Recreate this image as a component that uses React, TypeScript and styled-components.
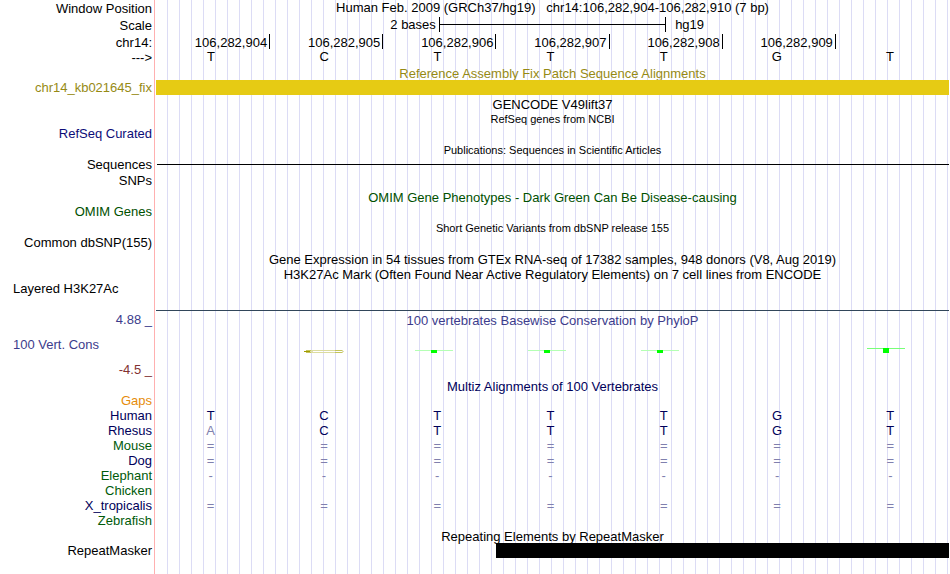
import React from "react";
import styled, { createGlobalStyle } from "styled-components";

const GlobalStyle = createGlobalStyle`
  body {
    margin: 0;
    background: #ffffff;
    color: #000000;
    font-family: "Liberation Sans", Arial, Helvetica, sans-serif;
    font-size: 13px;
    line-height: 15px;
  }
`;

const colors = {
  black: "#000000",
  olive: "#968a14",
  gold: "#e6cb14",
  navy: "#0c0c78",
  green: "#005000",
  violet: "#3c3c8c",
  maroon: "#823232",
  orange: "#e68c0a",
  slate: "#32465a",
  species: "#00005a",
  speciesAlt: "#005a0a",
  faded: "#8080ae",
};

const Browser = styled.main`
  box-sizing: border-box;
  min-height: 100vh;
  padding-right: 1px;
  padding-bottom: 16px;
  background:
    linear-gradient(#ffb0b0, #ffb0b0) 154px 0 / 1px 100% no-repeat,
    repeating-linear-gradient(to right, transparent 0 11px, #dcdcf5 11px 12px) 156px 0 / 100% 100% no-repeat;
`;

const Row = styled.div<{ $height?: number; $gap?: number }>`
  display: grid;
  grid-template-columns: 152px minmax(0, 1fr);
  column-gap: 4px;
  align-items: center;
  min-height: ${(p) => p.$height ?? 15}px;
  margin-top: ${(p) => p.$gap ?? 0}px;
`;

const Label = styled.div<{ $color?: string; $left?: boolean; $low?: boolean }>`
  grid-column: 1;
  height: 15px;
  padding-left: 13px;
  line-height: ${(p) => (p.$low ? 17 : 15)}px;
  text-align: ${(p) => (p.$left ? "left" : "right")};
  white-space: nowrap;
  color: ${(p) => p.$color ?? colors.black};
`;

const Title = styled.div<{ $color?: string; $small?: boolean }>`
  grid-column: 2;
  height: 15px;
  text-align: center;
  white-space: pre;
  font-size: ${(p) => (p.$small ? 11 : 13)}px;
  line-height: 17px;
  color: ${(p) => p.$color ?? colors.black};
`;

const WindowTitle = styled(Title)`
  line-height: 13px;
`;

const ScaleGrid = styled.div`
  display: grid;
  grid-template-columns: 5fr 4fr 5fr;
  align-items: center;
  padding-right: 1px;
`;

const ScaleText = styled.span<{ $end?: boolean }>`
  padding: 0 ${(p) => (p.$end ? 3 : 10)}px;
  text-align: ${(p) => (p.$end ? "right" : "left")};
`;

const Bracket = styled.div`
  display: flex;
  align-items: center;
  height: 15px;
  margin-right: -1px;
  border: solid #000000;
  border-width: 0 1px;

  &::before {
    content: "";
    flex: 1;
    height: 1px;
    background: #000000;
  }
`;

const Columns = styled.div`
  display: grid;
  grid-template-columns: repeat(7, minmax(0, 1fr));
  padding-right: 1px;
`;

const Tick = styled.div`
  box-sizing: border-box;
  height: 15px;
  padding-right: 2px;
  line-height: 17px;
  text-align: right;

  & + & {
    border-left: 1px solid #000000;
  }
`;

const Base = styled.div`
  padding-right: 3px;
  text-align: center;
`;

const Bar = styled.div<{ $color: string; $start?: number }>`
  height: 15px;
  margin-left: ${(p) => ((p.$start ?? 0) * 100) / 7}%;
  background: ${(p) => p.$color};
`;

const Rule = styled.div<{ $color: string; $inset?: boolean }>`
  grid-column: 2;
  height: 1px;
  margin-left: ${(p) => (p.$inset ? 1 : 0)}px;
  background: ${(p) => p.$color};
`;

const AxisLabels = styled.div`
  display: flex;
  flex-direction: column;
  justify-content: space-between;
  height: 65px;
`;

const Conservation = styled.div`
  display: flex;
  flex-direction: column;
  gap: 21px;
  height: 65px;
`;

const Mark = styled.div`
  display: flex;
  justify-content: center;
  height: 8px;
`;

const Alignment = styled.table`
  width: 100%;
  table-layout: fixed;
  border-collapse: collapse;
`;

const Species = styled.th<{ $color: string }>`
  width: 152px;
  height: 15px;
  padding: 0 4px 0 0;
  text-align: right;
  font-weight: normal;
  color: ${(p) => p.$color};
`;

const Cell = styled.td<{ $faded: boolean }>`
  padding: 0 4px 0 0;
  text-align: center;
  color: ${(p) => (p.$faded ? colors.faded : colors.species)};
`;

type Score = "none" | "negative" | "low" | "high";

function ScoreMark({ score }: { score: Score }) {
  if (score === "none") return <Mark />;
  return (
    <Mark>
      <svg width="52" height="8" viewBox="0 0 52 8" shapeRendering="crispEdges" aria-hidden="true">
        {score === "negative" && (
          <>
            <path d="M7 2.5h36M7 4.5h36" stroke="#dcdca0" />
            <path d="M6 2.5h5M6 4.5h5M35 2.5h7M35 4.5h7" stroke="#c4c45a" />
            <path d="M4 3.5h6" stroke="#a09a00" />
            <path d="M10 3.5h3M42 3.5h2" stroke="#e0e0b0" />
          </>
        )}
        {score === "low" && (
          <>
            <rect x="2" y="2" width="38" height="1" fill="#b4ffb4" />
            <rect x="18" y="2" width="6" height="3" fill="#00ff00" />
          </>
        )}
        {score === "high" && (
          <>
            <rect x="2" y="0" width="38" height="1" fill="#78ff78" />
            <rect x="18" y="0" width="6" height="5" fill="#00ff00" />
          </>
        )}
      </svg>
    </Mark>
  );
}

const positions = ["106,282,904", "106,282,905", "106,282,906", "106,282,907", "106,282,908", "106,282,909", ""];
const bases = "TCTTTGT".split("");
const scores: Score[] = ["none", "negative", "low", "low", "low", "none", "high"];

const species = [
  { name: "Gaps", color: colors.orange, cells: "       " },
  { name: "Human", color: colors.species, cells: "TCTTTGT" },
  { name: "Rhesus", color: colors.species, cells: "ACTTTGT" },
  { name: "Mouse", color: colors.speciesAlt, cells: "=======" },
  { name: "Dog", color: colors.species, cells: "=======" },
  { name: "Elephant", color: colors.speciesAlt, cells: "-------" },
  { name: "Chicken", color: colors.speciesAlt, cells: "       " },
  { name: "X_tropicalis", color: colors.species, cells: "=======" },
  { name: "Zebrafish", color: colors.speciesAlt, cells: "       " },
];

export default function App() {
  return (
    <>
      <GlobalStyle />
      <Browser>
        <Row $height={16}>
          <Label>Window Position</Label>
          <WindowTitle>{"Human Feb. 2009 (GRCh37/hg19)   chr14:106,282,904-106,282,910 (7 bp)"}</WindowTitle>
        </Row>
        <Row $height={17}>
          <Label $low>Scale</Label>
          <ScaleGrid>
            <ScaleText $end>2 bases</ScaleText>
            <Bracket />
            <ScaleText>hg19</ScaleText>
          </ScaleGrid>
        </Row>
        <Row $gap={1}>
          <Label $low>chr14:</Label>
          <Columns>
            {positions.map((p, i) => (
              <Tick key={i}>{p}</Tick>
            ))}
          </Columns>
        </Row>
        <Row>
          <Label $low>{"--->"}</Label>
          <Columns>
            {bases.map((b, i) => (
              <Base key={i}>{b}</Base>
            ))}
          </Columns>
        </Row>

        <Row $gap={1}>
          <Title $color={colors.olive}>Reference Assembly Fix Patch Sequence Alignments</Title>
        </Row>
        <Row>
          <Label $color={colors.olive}>chr14_kb021645_fix</Label>
          <Bar $color={colors.gold} />
        </Row>

        <Row $gap={1}>
          <Title>GENCODE V49lift37</Title>
        </Row>
        <Row>
          <Title $small>RefSeq genes from NCBI</Title>
        </Row>
        <Row>
          <Label $color={colors.navy}>RefSeq Curated</Label>
        </Row>

        <Row $gap={1}>
          <Title $small>Publications: Sequences in Scientific Articles</Title>
        </Row>
        <Row>
          <Label>Sequences</Label>
          <Rule $color={colors.black} $inset />
        </Row>
        <Row $height={16}>
          <Label>SNPs</Label>
        </Row>

        <Row $gap={1}>
          <Title $color={colors.green}>OMIM Gene Phenotypes - Dark Green Can Be Disease-causing</Title>
        </Row>
        <Row>
          <Label $color={colors.green}>OMIM Genes</Label>
        </Row>

        <Row $gap={1}>
          <Title $small>Short Genetic Variants from dbSNP release 155</Title>
        </Row>
        <Row>
          <Label>Common dbSNP(155)</Label>
        </Row>

        <Row $gap={1}>
          <Title>Gene Expression in 54 tissues from GTEx RNA-seq of 17382 samples, 948 donors (V8, Aug 2019)</Title>
        </Row>
        <Row>
          <Title>H3K27Ac Mark (Often Found Near Active Regulatory Elements) on 7 cell lines from ENCODE</Title>
        </Row>
        <Row>
          <Label $left>Layered H3K27Ac</Label>
        </Row>
        <Row $height={1} $gap={14}>
          <Rule $color={colors.slate} />
        </Row>

        <Row $gap={1}>
          <AxisLabels>
            <Label $color={colors.violet}>4.88 _</Label>
            <Label $color={colors.violet} $left>100 Vert. Cons</Label>
            <Label $color={colors.maroon}>-4.5 _</Label>
          </AxisLabels>
          <Conservation>
            <Title $color={colors.violet}>100 vertebrates Basewise Conservation by PhyloP</Title>
            <Columns>
              {scores.map((s, i) => (
                <ScoreMark key={i} score={s} />
              ))}
            </Columns>
          </Conservation>
        </Row>

        <Row $gap={1}>
          <Title $color={colors.species}>Multiz Alignments of 100 Vertebrates</Title>
        </Row>
        <Alignment>
          <tbody>
            {species.map((s) => (
              <tr key={s.name}>
                <Species scope="row" $color={s.color}>{s.name}</Species>
                {s.cells.split("").map((c, i) => (
                  <Cell key={i} $faded={c === "=" || c === "-" || c === "A"}>{c}</Cell>
                ))}
              </tr>
            ))}
          </tbody>
        </Alignment>

        <Row>
          <Title>Repeating Elements by RepeatMasker</Title>
        </Row>
        <Row>
          <Label>RepeatMasker</Label>
          <Bar $color={colors.black} $start={3} />
        </Row>
      </Browser>
    </>
  );
}
